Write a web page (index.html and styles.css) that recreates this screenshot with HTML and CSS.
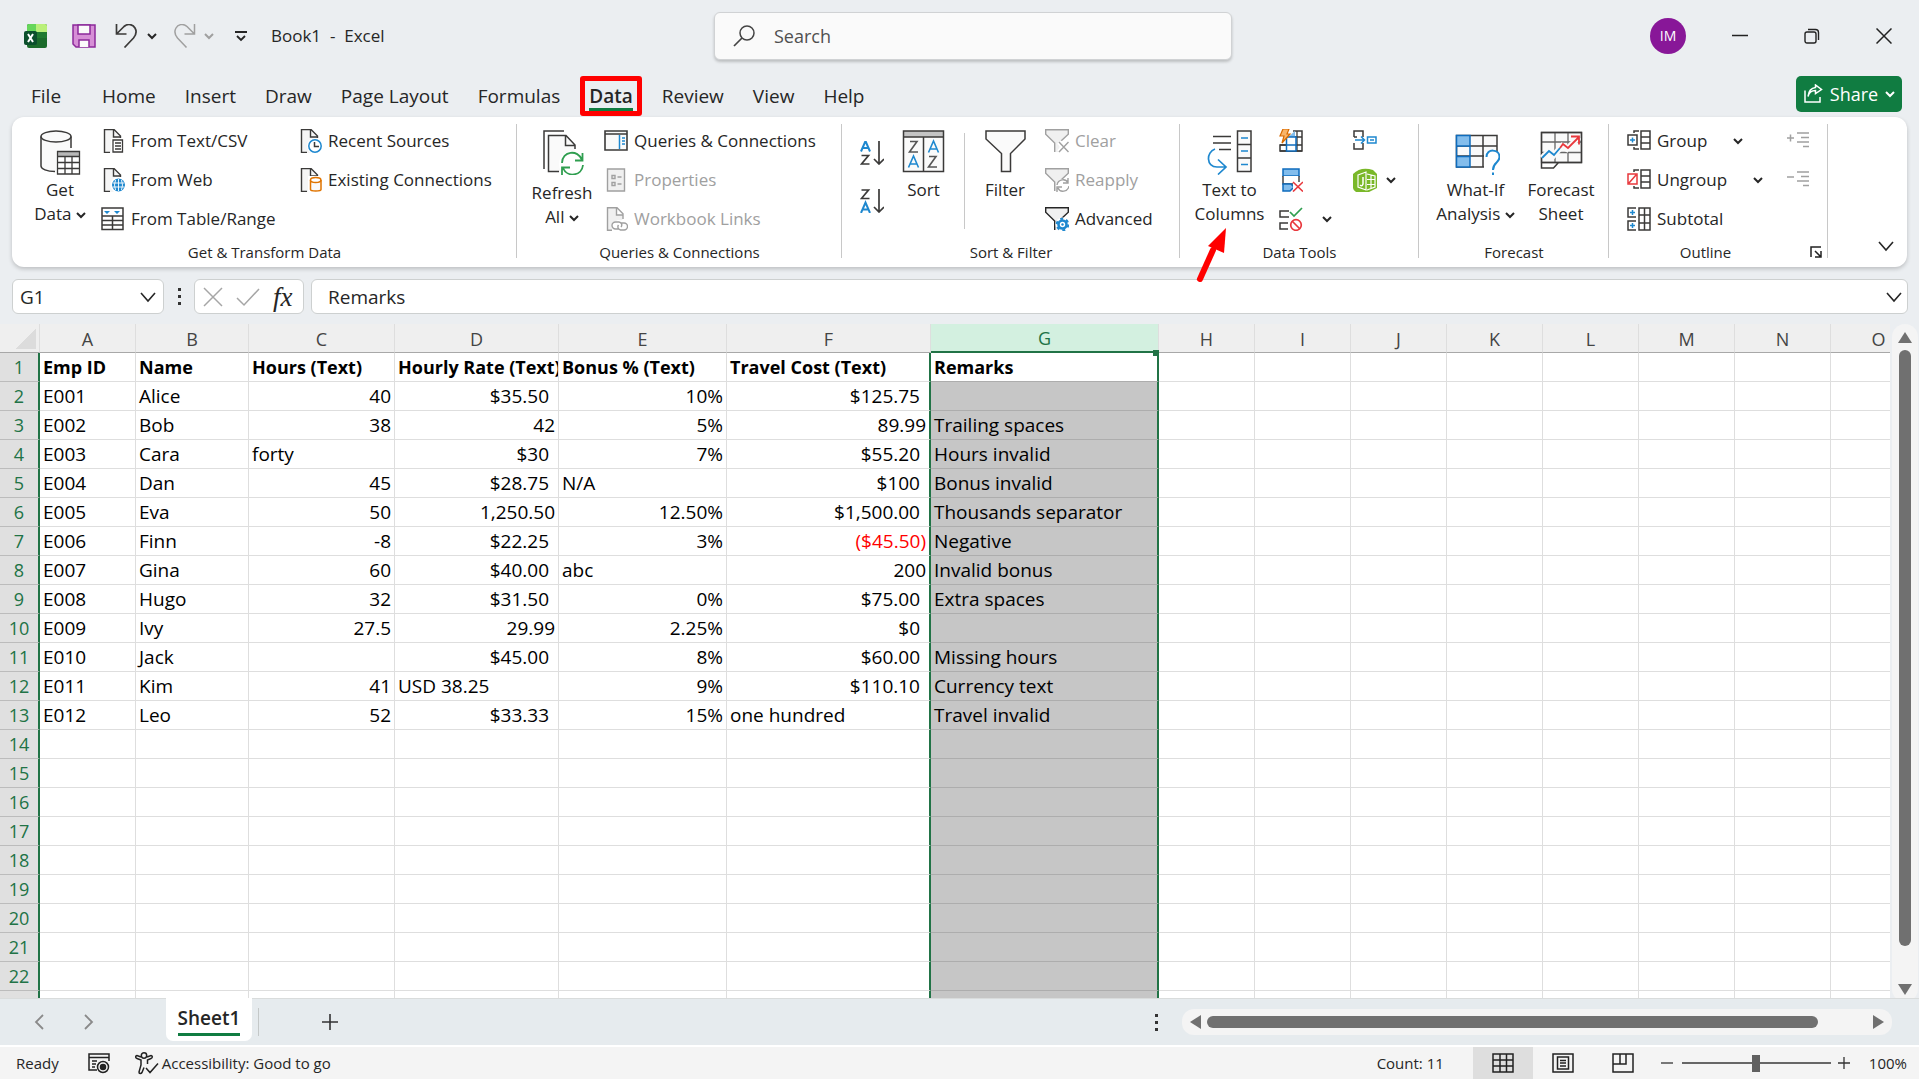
FILE: index.html
```html
<!DOCTYPE html>
<html lang="en">
<head>
<meta charset="utf-8">
<title>Book1 - Excel</title>
<link rel="stylesheet" href="styles.css">
</head>
<body>
<svg class="defs" aria-hidden="true">
  <symbol id="caret" viewBox="0 0 10 10"><path d="M1 3l4 4 4-4" fill="none" stroke="currentColor" stroke-width="2"/></symbol>
  <symbol id="chevron" viewBox="0 0 16 16"><path d="M1 4l7 8 7-8" fill="none" stroke="currentColor" stroke-width="1.6"/></symbol>
  <symbol id="page" viewBox="0 0 24 24"><path d="M3.5.5H13l6 6V24H3.5z" fill="#f5f5f5"/><path d="M9 23.5H3.5V.5H13l6.5 6.5v2M12.5.5V8H19" fill="none" stroke="#3b3a39" stroke-width="1.4"/></symbol>
  <symbol id="funnel" viewBox="0 0 24 24"><path d="M.7.7h22.600v4.500L14.500 14v9H9.500v-9L.7 5.200z" fill="#f0f0f0"/><path d="M9.700 23v-9L.7 5.200V.7h22.600v4.500L16 12" fill="none" stroke="currentColor" stroke-width="1.400"/></symbol>
</svg>

<header class="titlebar">
  <div class="quick">
    <svg class="i24" viewBox="0 0 24 24"><rect x="3" y="0" width="20" height="24" rx="2" fill="#1b6b2b"/><path d="M3 2a2 2 0 0 1 2-2h7v8H3z" fill="#66d65b"/><path d="M12 0h9a2 2 0 0 1 2 2v6H12z" fill="#baf07a"/><path d="M12 8h11v6H12z" fill="#1f7a30"/><rect x="0" y="7" width="13" height="14" rx="2" fill="#0b4f2c"/><path d="M4 10l5 8M9 10l-5 8" stroke="#fff" stroke-width="2"/></svg>
    <button class="flat save" aria-label="Save"><svg class="i24" viewBox="0 0 24 24"><path d="M1 1h22v22H4l-3-3z" fill="#d68fd6" stroke="#8c2a9a" stroke-width="1.500"/><path d="M6 1h12v9H6z" fill="#fafafa" stroke="#8c2a9a" stroke-width="1.500"/><path d="M7 23v-7h10v7" fill="#fafafa" stroke="#8c2a9a" stroke-width="1.500"/></svg></button>
    <button class="flat undo" aria-label="Undo"><svg class="i24" viewBox="0 0 24 24"><path d="M1.500 0v10h10M1.500 10L9 2.500C13-1 18 .5 20 4s1 7-1.500 10L9.500 23.500" fill="none" stroke="#3b3a39" stroke-width="1.700"/></svg><svg class="i10"><use href="#caret"/></svg></button>
    <button class="flat redo" aria-label="Redo" disabled><svg class="i24" viewBox="0 0 24 24"><path d="M22.500 0v10h-10M22.500 10L15 2.500C11-1 6 .5 4 4s-1 7 1.500 10l9 9.500" fill="none" stroke="currentColor" stroke-width="1.500"/></svg><svg class="i10"><use href="#caret"/></svg></button>
    <button class="flat custom" aria-label="Customize"><svg class="i12" viewBox="0 0 12 12"><path d="M0 2h12M2 6l4 4 4-4" fill="none" stroke="currentColor" stroke-width="1.800"/></svg></button>
    <span class="doc">Book1&nbsp; -&nbsp; Excel</span>
  </div>
  <label class="search"><svg class="i24" viewBox="0 0 24 24"><circle cx="14" cy="9" r="7" fill="none" stroke="#444" stroke-width="1.500"/><path d="M9 14l-8 8" stroke="#444" stroke-width="1.700"/></svg><input type="text" placeholder="Search" aria-label="Search"></label>
  <div class="window">
    <button class="avatar">IM</button>
    <button class="flat" aria-label="Minimize"><svg class="i16" viewBox="0 0 16 16"><path d="M0 7.500h16" stroke="#222" stroke-width="1.500"/></svg></button>
    <button class="flat" aria-label="Restore"><svg class="i16" viewBox="0 0 16 16" fill="none" stroke="#222" stroke-width="1.400"><rect x="1" y="4" width="11" height="11" rx="2"/><path d="M4 1.500h7.500a3 3 0 0 1 3 3V12"/></svg></button>
    <button class="flat" aria-label="Close"><svg class="i16" viewBox="0 0 16 16"><path d="M.5.5l15 15M15.500.5l-15 15" stroke="#222" stroke-width="1.500"/></svg></button>
  </div>
</header>

<nav class="tabs">
  <a href="#" class="file">File</a><a href="#">Home</a><a href="#">Insert</a><a href="#">Draw</a><a href="#">Page Layout</a><a href="#">Formulas</a><a href="#" class="active">Data</a><a href="#">Review</a><a href="#">View</a><a href="#">Help</a>
  <button class="share"><svg class="i20" viewBox="0 0 20 20" fill="none" stroke="#fff" stroke-width="1.500"><path d="M2 6.500V18h15v-5"/><path d="M5 12.500C6 8.500 9 6.500 12.500 6.500V9.500L18.500 5.500 12.500 1v2.500C8 4 5.500 8 5 12.500z"/></svg>Share<svg class="i10"><use href="#caret"/></svg></button>
</nav>

<section class="ribbon">
  <div class="group g-get">
    <div class="body">
      <button class="big"><svg class="i45" viewBox="0 0 45 45"><path d="M3 6v31c0 3 7 5 15 5V20h15V6C33 0 3 0 3 6z" fill="#fafafa"/><g fill="none" stroke="#3b3a39" stroke-width="1.500"><ellipse cx="18" cy="6.500" rx="15" ry="5.500"/><path d="M3 6.500V36c0 3 6 5.500 14 5.500M33 6.500V18"/></g><rect x="19" y="21.500" width="23" height="23" fill="#fff"/><rect x="19" y="21.500" width="23" height="5" fill="#b8b8b8"/><path d="M19.500 21.500h22v22.500h-22zM19.500 26.500h22M19.500 32.500h22M19.500 38.500h22M27 26.500v18M34 26.500v18" fill="none" stroke="#3b3a39" stroke-width="1.300"/></svg><span>Get<br>Data <svg class="i10"><use href="#caret"/></svg></span></button>
      <div class="col c1">
        <button class="small"><svg class="i24" viewBox="0 0 24 24"><use href="#page"/><rect x="10" y="9" width="14" height="15" fill="#fff"/><path d="M12 11h9.500v12H12zM14 14h6M14 17h6M14 20h6" fill="none" stroke="#3b3a39" stroke-width="1.300"/></svg>From Text/CSV</button>
        <button class="small"><svg class="i24" viewBox="0 0 24 24"><use href="#page"/><circle cx="17.500" cy="17" r="8" fill="#fff"/><circle cx="17.500" cy="17" r="6.500" fill="#1e88cf"/><path d="M17.500 11v12M11.500 15h12M11.500 19h12M14.500 12q-2 5 0 10M20.500 12q2 5 0 10" fill="none" stroke="#fff" stroke-width=".9"/></svg>From Web</button>
        <button class="small"><svg class="i24" viewBox="0 0 24 24"><path d="M1 1h21v21.500H1zM1 9h21M1 13.500h21M1 18h21M11.500 9v13.500" fill="none" stroke="#3b3a39" stroke-width="1.500"/><path d="M3 4h6L6 7zM13 4h6l-3 3z" fill="#1e88cf"/></svg>From Table/Range</button>
      </div>
      <div class="col">
        <button class="small"><svg class="i24" viewBox="0 0 24 24"><use href="#page"/><circle cx="17" cy="17" r="8" fill="#fff"/><circle cx="17" cy="17" r="6.200" fill="#fff" stroke="#1e88cf" stroke-width="1.500"/><path d="M16.500 13v4.500H21" fill="none" stroke="#3b3a39" stroke-width="1.500"/></svg>Recent Sources</button>
        <button class="small"><svg class="i24" viewBox="0 0 24 24"><use href="#page"/><path d="M10 8h14v16H10z" fill="#fff"/><path d="M12.500 12v9.500c0 2 10.500 2 10.500 0V12" fill="#fafafa" stroke="#e07400" stroke-width="1.500"/><ellipse cx="17.700" cy="12" rx="5.200" ry="2.500" fill="#fff" stroke="#e07400" stroke-width="1.500"/></svg>Existing Connections</button>
      </div>
    </div>
    <div class="label">Get &amp; Transform Data</div>
  </div>

  <div class="group g-query">
    <div class="body">
      <button class="big refresh"><svg class="i45" viewBox="0 0 45 45"><path d="M8 5.500h18l9 9.500V42H8z" fill="#fafafa"/><path d="M24 1H4v38M19 41.500H8.500V5.500H26l9 9.500v4M25.500 5.500V15.500H35" fill="none" stroke="#3b3a39" stroke-width="1.500"/><circle cx="32" cy="34" r="13" fill="#fff"/><g fill="none" stroke="#2f9e4f" stroke-width="1.800"><path d="M22 33c0-12 16-14 20-3M42.500 23v7.500H35M43 35c-1 11-16 13-20 3M22 45v-7.500h8"/></g></svg><span>Refresh<br>All <svg class="i10"><use href="#caret"/></svg></span></button>
      <div class="col">
        <button class="small"><svg class="i24" viewBox="0 0 24 24"><path d="M1 2h22v19H1zM1 5h22" fill="#fafafa" stroke="#3b3a39" stroke-width="1.600"/><path d="M15.500 6v14" stroke="#1e88cf" stroke-width="1.500"/><path d="M18 9h3M18 12h3M18 15h3" stroke="#1e88cf" stroke-width="1.500"/></svg>Queries &amp; Connections</button>
        <button class="small" disabled><svg class="i24" viewBox="0 0 24 24" fill="#f0f0f0" stroke="currentColor" stroke-width="1.400"><path d="M3.500 1h17v22h-17z"/><path d="M8 7.500h3v3H8zM8 14.500h3v3H8zM13.500 9h4M13.500 16h4"/></svg>Properties</button>
        <button class="small" disabled><svg class="i24" viewBox="0 0 24 24" fill="#f0f0f0" stroke="currentColor" stroke-width="1.400"><path d="M8 23.300H3.500V.7H13l6 6V12M12.500.7V8H19"/><path d="M8 24v-8l6-3 10 1v10z" fill="#fff" stroke="none"/><path d="M15 22H11.500a3.300 3.300 0 0 1 0-7H15a3 3 0 0 1 2 5M17 16h3a3.200 3.200 0 0 1 0 7h-3.500a3.200 3.200 0 0 1-2-5" fill="none"/></svg>Workbook Links</button>
      </div>
    </div>
    <div class="label">Queries &amp; Connections</div>
  </div>

  <div class="group g-sort">
    <div class="body">
      <div class="az">
        <button class="flat" aria-label="Sort A to Z"><svg class="i24" viewBox="0 0 24 24" fill="none" stroke="#3b3a39" stroke-width="1.700"><path d="M1 10.500L5.500 0 10 10.500M2.500 7h6" stroke="#1e88cf" stroke-width="2"/><path d="M1.500 14.500H8.500L1.500 23h8M19 0v23M14 18l5 5 5-5"/></svg></button>
        <button class="flat" aria-label="Sort Z to A"><svg class="i24" viewBox="0 0 24 24" fill="none" stroke="#3b3a39" stroke-width="1.700"><path d="M1 24L5.500 13.500 10 24M2.500 20.500h6" stroke="#1e88cf" stroke-width="2"/><path d="M1.500 1H8.500L1.500 9.500h8M19 0v23M14 18l5 5 5-5"/></svg></button>
      </div>
      <button class="big sort"><svg class="i45" viewBox="0 0 45 45"><path d="M2 1h41v41H2z" fill="#fafafa"/><path d="M2 1h41v6H2z" fill="#c4c4c4"/><path d="M2.500 1h40v40.500h-40zM2.500 7h40M22.500 7v34.500" fill="none" stroke="#3b3a39" stroke-width="1.500"/><g fill="none" stroke="#555" stroke-width="1.600"><path d="M9 11.500h7L8.500 22H17M28 26.500h7L27.500 37H36"/><path d="M7.500 37.500l5-11.500 5 11.500M9 34h7M27.500 22.500l5-11.500 5 11.500M29 19h7" stroke="#1e88cf"/></g></svg><span>Sort</span></button>
      <div class="rule"></div>
      <button class="big filter"><svg class="i45" viewBox="0 0 45 45"><path d="M3 1h39v8L27.500 23.500V41.500h-9V23.500L3 9z" fill="#fafafa" stroke="#3b3a39" stroke-width="1.500"/></svg><span>Filter</span></button>
      <div class="col">
        <button class="small" disabled><svg class="i24" viewBox="0 0 24 24"><use href="#funnel"/><path d="M14 13l10 10M24 13L14 23" stroke="#fff" stroke-width="5"/><path d="M14 13l9.500 10M23.500 13L14 23" stroke="currentColor" stroke-width="1.400"/></svg>Clear</button>
        <button class="small" disabled><svg class="i24" viewBox="0 0 24 24"><use href="#funnel"/><circle cx="18" cy="18" r="7" fill="#fff"/><path d="M12 17c1-6 9-7 11-2M23 10v5h-5M24 18c-1 6-9 7-11 2M12 24v-5h5" fill="none" stroke="currentColor" stroke-width="1.400"/></svg>Reapply</button>
        <button class="small"><svg class="i24" viewBox="0 0 24 24"><use href="#funnel"/><circle cx="17.500" cy="17.500" r="7" fill="#fff"/><circle cx="17.500" cy="17.500" r="4" fill="none" stroke="#1e88cf" stroke-width="2.600"/><circle cx="17.500" cy="17.500" r="5.800" fill="none" stroke="#1e88cf" stroke-width="2" stroke-dasharray="3 3.070"/><circle cx="17.500" cy="17.500" r="1.200" fill="#1e88cf"/></svg>Advanced</button>
      </div>
    </div>
    <div class="label">Sort &amp; Filter</div>
  </div>

  <div class="group g-tools">
    <div class="body">
      <button class="big t2c"><svg class="i45" viewBox="0 0 45 45"><path d="M30.500 1H44v40.500H30.500zM30.500 14.500H44M30.500 28H44" fill="#fafafa" stroke="#3b3a39" stroke-width="1.500"/><path d="M6 6.500h18M6 13h18M12 19.500h12" stroke="#3b3a39" stroke-width="1.500"/><path d="M34 8h7M34 21h7M34 34.500h7" stroke="#1e88cf" stroke-width="1.600"/><path d="M8 19C-1 22-1 37 10 37h9M11 29.500l8 7.500-8 7.500" fill="none" stroke="#1e88cf" stroke-width="1.700"/></svg><span>Text to<br>Columns</span>
        <svg class="arrow" viewBox="0 0 32 56"><path d="M6 51L19 22" stroke="#f00" stroke-width="6" stroke-linecap="round"/><path d="M32 0L14 18l16 7z" fill="#f00"/></svg></button>
      <div class="col tools1">
        <button class="small" aria-label="Flash Fill"><svg class="i24" viewBox="0 0 24 24"><path d="M14 2h9v20H1v-6h6" fill="none" stroke="#3b3a39" stroke-width="1.500"/><path d="M1 16h22M1 22h22M15 8h8M18 2v20" stroke="#3b3a39" stroke-width="1.300"/><path d="M8 9L16 2v7H9z" fill="#83bdec"/><path d="M7.500 8h9.500v14H7.500zM7.500 16H17" fill="#fff" stroke="#0f6cbd" stroke-width="1.500"/><path d="M4 0h6L8 5h3L3 14l2-7H1z" fill="#f9b56a" stroke="#d96b00" stroke-width="1.200"/></svg></button>
        <button class="small" aria-label="Remove Duplicates"><svg class="i24" viewBox="0 0 24 24"><path d="M4 1h16v7H4z" fill="#83bdec" stroke="#0f6cbd" stroke-width="1.500"/><path d="M4 8v8h16V8" fill="#fff" stroke="#3b3a39" stroke-width="1.400"/><path d="M4 16h8l3 3-4 4H4z" fill="#83bdec" stroke="#0f6cbd" stroke-width="1.500"/><path d="M14 14h10v10H14z" fill="#fff"/><path d="M14 14l10 9.500M24 14l-10 9.500" stroke="#e8383d" stroke-width="1.600"/></svg></button>
        <button class="small" aria-label="Data Validation"><svg class="i24" viewBox="0 0 24 24" fill="none" stroke="#3b3a39" stroke-width="1.500"><path d="M10 4H1v6h9M9 16H1v6h8"/><path d="M11 5l4 4 8-8" stroke="#2f9e4f" stroke-width="1.700"/><circle cx="17" cy="18" r="5.300" stroke="#e8383d" stroke-width="1.700"/><path d="M13 14l8 8" stroke="#e8383d" stroke-width="1.700"/></svg><svg class="i10 gap"><use href="#caret"/></svg></button>
      </div>
      <div class="col">
        <button class="small" aria-label="Consolidate"><svg class="i24" viewBox="0 0 24 24" fill="none" stroke="#3b3a39" stroke-width="1.500"><path d="M1 8V2h9v6M1 14v6h9v-6M1 8h3"/><path d="M2 11h9M8 7.500l3.500 3.500L8 14.500M14.500 8h8.500v6h-8.500zM17 11h4" stroke="#1e88cf"/></svg></button>
        <button class="small" aria-label="Data Model"><svg class="i24" viewBox="0 0 24 24"><path d="M0 6Q8-2 20 2l4 4v14l-8 4H3q-3-2-3-4z" fill="#7ab829"/><path d="M5 7l8-3v18l-8-3zM14 6l8 2v11l-8 3M14 11.500h8M14 16.500h8M18 7v13" fill="none" stroke="#fff" stroke-width="1.200"/><path d="M10 9v7q-1 3-3 1" stroke="#fff" stroke-width="1.500" fill="none"/></svg><svg class="i10"><use href="#caret"/></svg></button>
      </div>
    </div>
    <div class="label">Data Tools</div>
  </div>

  <div class="group g-fore">
    <div class="body">
      <button class="big whatif"><svg class="i45" viewBox="0 0 45 45"><path d="M1 5h41v32H1z" fill="#fafafa"/><path d="M1.500 5.500H42V37H1.500zM1.500 16H42M1.500 26H42M28 5v32" fill="none" stroke="#3b3a39" stroke-width="1.500"/><path d="M1.500 5.500H15V16H1.500zM1.500 26.500H15V37H1.500zM1.500 5v32M15 5v32" fill="#83bdec" stroke="#0f6cbd" stroke-width="1.500"/><path d="M29 22h16v23H29z" fill="#fff"/><path d="M31.500 27c0-9 13-8 13 0 0 6-6.500 5-6.500 13M38 42.500v2.500" fill="none" stroke="#1e88cf" stroke-width="2"/></svg><span>What-If<br>Analysis <svg class="i10"><use href="#caret"/></svg></span></button>
      <button class="big fsheet"><svg class="i45" viewBox="0 0 45 45"><path d="M2.500 2.500h40v30h-40zM2.500 12h40M2.500 22.500h40M16 2.500v30M29 2.500v30" fill="#fafafa" stroke="#666" stroke-width="1.300"/><path d="M2.500 32.500v5.500h12l5-5.500M2.500 2.500h40v30h-40z" fill="none" stroke="#3b3a39" stroke-width="1.500"/><path d="M3 28l7-7 5 4 8-9 5 3L40 7" fill="none" stroke="#fafafa" stroke-width="6"/><path d="M3 28l7-7 5 4 6-7" fill="none" stroke="#1e88cf" stroke-width="1.800"/><path d="M21 18l3-4 5 4L40 7M32 6.500h8v8" fill="none" stroke="#e8383d" stroke-width="1.800"/></svg><span>Forecast<br>Sheet</span></button>
    </div>
    <div class="label">Forecast</div>
  </div>

  <div class="group g-out">
    <div class="body">
      <div class="col outline">
        <button class="small"><svg class="i24" viewBox="0 0 24 24" fill="none" stroke="#3b3a39" stroke-width="1.500"><path d="M14 2h9v18h-9zM14 8h9M14 14h9M12 2H7v2M7 18v2h5M1 6h9v10H1z"/><path d="M3 11h5M5.500 8.500v5" stroke="#1e88cf"/></svg>Group<svg class="i10 far"><use href="#caret"/></svg></button>
        <button class="small"><svg class="i24" viewBox="0 0 24 24" fill="none" stroke="#3b3a39" stroke-width="1.500"><path d="M14 2h9v18h-9zM14 8h9M14 14h9M12 2H7v2M7 18v2h5"/><path d="M1 6h9v10H1zM2 15l7-8" stroke="#e8383d"/></svg>Ungroup<svg class="i10 far"><use href="#caret"/></svg></button>
        <button class="small"><svg class="i24" viewBox="0 0 24 24" fill="none" stroke="#3b3a39" stroke-width="1.500"><path d="M12 1h11v22H12zM12 8h11M12 16h11M17.500 1v22M9 1H1v9h8M9 14H1v9h8"/><path d="M3 5.500h5M5.500 3v5M3 18.500h5M5.500 16v5" stroke="#1e88cf"/></svg>Subtotal</button>
      </div>
      <div class="col">
        <button class="small" aria-label="Show Detail" disabled><svg class="i24" viewBox="0 0 24 24" stroke="currentColor" stroke-width="1.500"><path d="M10 4h12M14 8.500h8M10 13h12M16 17.500h6M0 9h7M3.500 5.500v7"/></svg></button>
        <button class="small" aria-label="Hide Detail" disabled><svg class="i24" viewBox="0 0 24 24" stroke="currentColor" stroke-width="1.500"><path d="M10 4h12M14 8.500h8M10 13h12M16 17.500h6M0 9h7"/></svg></button>
      </div>
    </div>
    <div class="label">Outline<button class="flat launcher" aria-label="Outline settings"><svg class="i12" viewBox="0 0 12 12" fill="none" stroke="#222" stroke-width="1.500"><path d="M1 11V1h10M5 5l6 6M11 5v6H5"/></svg></button></div>
  </div>
  <button class="flat collapse" aria-label="Collapse ribbon"><svg class="i16"><use href="#chevron"/></svg></button>
</section>

<section class="formula">
  <label class="namebox"><input type="text" value="G1" aria-label="Name box"><svg class="i16"><use href="#chevron"/></svg></label>
  <span class="dots"></span>
  <div class="fx">
    <button class="flat" aria-label="Cancel"><svg class="i20" viewBox="0 0 20 20"><path d="M1 1l18 18M19 1L1 19" stroke="#a6a6a6" stroke-width="1.500"/></svg></button>
    <button class="flat" aria-label="Enter"><svg class="i24" viewBox="0 0 24 24"><path d="M1 13l7 7L23 4" fill="none" stroke="#a6a6a6" stroke-width="1.500"/></svg></button>
    <button class="flat fxb">fx</button>
  </div>
  <label class="entry"><input type="text" value="Remarks" aria-label="Formula bar"><svg class="i16"><use href="#chevron"/></svg></label>
</section>

<main class="sheet">
  <div class="cells"><table class="grid" id="grid"></table></div>
  <div class="vscroll"><i class="tri up"></i><i class="thumb"></i><i class="tri down"></i></div>
</main>

<footer>
  <div class="sheets">
    <button class="flat prev" aria-label="Previous sheet"><svg class="i16" viewBox="0 0 16 16"><path d="M11 1L4 8l7 7" fill="none" stroke="#8a8a8a" stroke-width="1.800"/></svg></button>
    <button class="flat next" aria-label="Next sheet"><svg class="i16" viewBox="0 0 16 16"><path d="M5 1l7 7-7 7" fill="none" stroke="#8a8a8a" stroke-width="1.800"/></svg></button>
    <button class="sheet-tab"><span>Sheet1</span></button>
    <button class="flat add" aria-label="New sheet"><svg class="i16" viewBox="0 0 16 16"><path d="M0 8h16M8 0v16" stroke="#333" stroke-width="1.600"/></svg></button>
    <span class="dots"></span>
    <div class="hscroll"><i class="tri left"></i><i class="thumb"></i><i class="tri right"></i></div>
  </div>
  <div class="status">
    <span class="ready">Ready</span>
    <button class="flat macro" aria-label="Record macro"><svg class="i22" viewBox="0 0 22 22" fill="none" stroke="#222" stroke-width="1.500"><path d="M9 18H1V2h20v7M1 5.500h20M4 9h5M4 12h4M4 15h3"/><circle cx="15" cy="15" r="5.500"/><circle cx="15" cy="15" r="2.500" fill="#222"/></svg></button>
    <button class="flat access"><svg class="i24" viewBox="0 0 24 24" fill="none" stroke="#222" stroke-width="1.500"><circle cx="9" cy="4.500" r="2.700"/><path d="M6 6L2 4.500C0 5 .5 7 2 7.500L6 9v5l-2 7c0 2 2 2 3 .5l2-5M12 6l4-1.500c2 .5 1.500 2.500 0 3L12.500 9v4M11 17l4 4.500 8-9"/></svg>Accessibility: Good to go</button>
    <span class="count">Count: 11</span>
    <button class="flat view on" aria-label="Normal view"><svg class="i22" viewBox="0 0 22 22" fill="none" stroke="#222" stroke-width="1.500"><path d="M1 2h20v18H1zM1 8h20M1 14h20M8 2v18M14.500 2v18"/></svg></button>
    <button class="flat view" aria-label="Page layout view"><svg class="i22" viewBox="0 0 22 22" fill="none" stroke="#222" stroke-width="1.500"><path d="M1 2h20v18H1zM5.500 5h11v12h-11zM8 8.500h6M8 11h6M8 14h6"/></svg></button>
    <button class="flat view" aria-label="Page break view"><svg class="i22" viewBox="0 0 22 22" fill="none" stroke="#222" stroke-width="1.500"><path d="M1 2h20v18H1zM8 2v10M14 2v10H1"/></svg></button>
    <button class="flat zoom-out" aria-label="Zoom out"><svg class="i12" viewBox="0 0 12 12"><path d="M0 6h12" stroke="#333" stroke-width="1.300"/></svg></button>
    <input class="zoom" type="range" min="0" max="100" value="50" aria-label="Zoom">
    <button class="flat" aria-label="Zoom in"><svg class="i12" viewBox="0 0 12 12"><path d="M0 6h12M6 0v12" stroke="#333" stroke-width="1.300"/></svg></button>
    <span class="pct">100%</span>
  </div>
</footer>
<script src="grid.js"></script>
</body>
</html>
```
FILE: styles.css
```css
*, *::before, *::after { box-sizing: border-box; }
body {
  margin: 0;
  height: 100vh;
  display: flex;
  flex-direction: column;
  overflow: hidden;
  background: #ebeef1;
  color: #262626;
  font: 18px/24px "Open Sans", "Noto Sans", sans-serif;
}
button, input { font: inherit; color: inherit; }
button { margin: 0; padding: 0; border: 0; background: none; }
button:disabled { color: #a0a0a0; }
input[type="text"] { border: 0; padding: 0; background: none; min-width: 0; flex: 1; outline: 0; }
svg { flex: none; display: block; }
.defs { position: absolute; width: 0; height: 0; }
.flat { display: flex; align-items: center; justify-content: center; }
.i10 { width: 10px; height: 10px; }
.i12 { width: 12px; height: 12px; }
.i16 { width: 16px; height: 16px; }
.i20 { width: 20px; height: 20px; }
.i22 { width: 22px; height: 22px; }
.i24 { width: 24px; height: 24px; }
.i45 { width: 45px; height: 45px; }

.titlebar { display: grid; grid-template-columns: 690fr 518px 660fr; height: 72px; align-items: center; flex: none; padding: 0 27px 0 24px; }
.quick { display: flex; align-items: center; font-size: 17px; }
.save { margin-left: 24px; }
.undo, .redo { gap: 8px; }
.undo { margin-left: 19px; }
.redo { margin-left: 15px; }
.custom { margin-left: 21px; }
.doc { margin-left: 24px; }
.search { display: flex; align-items: center; gap: 17px; height: 48px; padding: 0 18px; background: #fafafa; border: 1px solid #d0d2d4; border-radius: 6px; box-shadow: 0 2px 3px #0003; }
.search input::placeholder { color: #505050; opacity: 1; }
.window { display: flex; justify-content: flex-end; align-items: center; gap: 56px; }
.avatar { width: 36px; height: 36px; margin-right: -10px; border-radius: 50%; background: #881798; color: #fff; font-size: 14px; }

.tabs { display: flex; gap: 29px; height: 45px; flex: none; padding: 0 17px 0 31px; font-size: 19px; }
.tabs a { color: inherit; text-decoration: none; height: 40px; line-height: 48px; white-space: nowrap; }
.tabs .file { margin-right: 12px; }
.tabs .active { position: relative; font-weight: 600; }
.tabs .active::before { content: ""; position: absolute; left: 0; right: 0; top: 36px; height: 3px; background: #107c41; }
.tabs .active::after { content: ""; position: absolute; left: -9px; right: -9px; top: 4px; height: 40px; border: 5px solid #f00; border-radius: 3px; }
.share { display: flex; align-items: center; justify-content: center; gap: 7px; width: 106px; height: 36px; margin: 4px 0 0 auto; border-radius: 5px; background: #107c41; color: #fff; font-size: 18px; }

.ribbon { display: flex; flex: none; height: 150px; margin: 0 12px; padding: 5px 0 2px; background: #fff; border-radius: 12px; box-shadow: 0 2px 4px #0003; }
.group { display: flex; flex-direction: column; flex: none; position: relative; }
.group::after { content: ""; position: absolute; right: 0; top: 2px; height: 134px; border-right: 1px solid #c8c8c8; }
.body { display: flex; height: 117px; font-size: 17px; }
.label { position: relative; text-align: center; font-size: 15px; line-height: 26px; }
.g-get { width: 505px; }
.g-query { width: 325px; }
.g-sort { width: 338px; }
.g-tools { width: 239px; }
.g-fore { width: 190px; }
.g-out { width: 219px; }
.g-out .label { padding-right: 26px; }
.big { display: flex; flex-direction: column; align-items: center; width: 96px; padding-top: 8px; gap: 3px; position: relative; line-height: 24px; white-space: nowrap; }
.big span svg { display: inline-block; }
.g-get .big { margin-right: -7px; }
.g-get .c1 { width: 197px; }
.g-query .big { width: 90px; margin-right: -3px; gap: 6px; }
.big.sort { width: 65px; margin-left: 7px; }
.rule { width: 1px; margin: 11px 0 10px 8px; background: #c8c8c8; }
.big.filter { width: 80px; }
.az { display: flex; flex-direction: column; gap: 24px; padding: 19px 0 0 18px; }
.big.t2c { width: 99px; }
.tools1 { width: 74px; }
.big.whatif { width: 100px; padding-left: 13px; }
.big.fsheet { width: 84px; }
.whatif svg.i45 { margin-left: 3px; }
.col { display: flex; flex-direction: column; flex: none; }
.small { display: flex; align-items: center; gap: 6px; height: 39px; white-space: nowrap; padding: 0 0 1px; }
.small:disabled { color: #a0a0a0; }
.gap { margin-left: 10px; }
.g-tools .col .small { gap: 9px; }
.outline { width: 178px; padding-left: 18px; }
.far { margin-left: 20px; }
.collapse { margin: 0 13px 11px auto; align-self: flex-end; }
.launcher { position: absolute; right: 6px; top: 7px; }
.arrow { position: absolute; left: 14px; top: 106px; width: 32px; height: 56px; z-index: 2; }

.formula { display: flex; flex: none; height: 57px; padding: 12px 11px 10px 12px; font-size: 19px; }
.namebox, .fx, .entry { display: flex; align-items: center; background: #fff; border: 1px solid #cdd0d0; border-radius: 6px; }
.namebox { width: 152px; padding: 0 7px; }
.dots { width: 3px; height: 17px; background: repeating-linear-gradient(#333 0 3px, transparent 3px 7px); align-self: center; margin: 0 13px 0 14px; }
.fx { width: 110px; padding: 0 6px 0 8px; gap: 13px; }
.fxb { font: italic 27px/24px "Liberation Serif", serif; }
.entry { flex: 1; margin-left: 7px; padding: 0 5px 0 16px; }

.sheet { display: flex; flex: 1; min-height: 0; }
.cells { flex: 1; overflow: hidden; background: #fff; min-width: 0; }
.vscroll { display: flex; flex-direction: column; align-items: center; width: 26px; margin: 0 1px -4px 2px; padding: 8px 0 7px; gap: 7px; border-radius: 13px; background: #f4f4f4; }
.vscroll .thumb { flex: 1; width: 12px; border-radius: 6px; background: #707070; margin-bottom: 31px; }
.tri { width: 14px; height: 11px; background: #707070; }
.up { clip-path: polygon(50% 0, 100% 100%, 0 100%); }
.down { clip-path: polygon(0 0, 100% 0, 50% 100%); }
.left, .right { width: 11px; height: 14px; }
.left { clip-path: polygon(0 50%, 100% 0, 100% 100%); }
.right { clip-path: polygon(0 0, 100% 50%, 0 100%); }

.grid { width: 1926px; table-layout: fixed; border-collapse: separate; border-spacing: 0; color: #000; font: 19px/28px "Open Sans", "Noto Sans", sans-serif; }
.grid td, .grid th { height: 29px; padding: 0 3px; border: 0 solid #dedede; border-width: 0 1px 1px 0; overflow: hidden; white-space: nowrap; text-align: left; font-weight: 400; }
.grid thead th { background: #efefef; color: #444; text-align: center; border-bottom-color: #a8a8a8; padding-top: 2px; font: 18px/26px "Open Sans", sans-serif; }
.grid tbody th { background: #e0e0e0; color: #217346; text-align: center; border-right: 2px solid #217346; border-bottom-color: #bcbcbc; padding: 0; font-size: 18px; }
.grid thead th.corner { background: linear-gradient(135deg, transparent 50%, #dcdcdc 50%) 15px 5px / 21px 20px no-repeat #efefef; }
.grid thead th.picked { position: relative; overflow: visible; background: #d3f0e0; color: #217346; border-bottom: 2px solid #217346; line-height: 25px; }
.grid thead th.picked::after { content: ""; position: absolute; right: -1px; bottom: -5px; width: 6px; height: 6px; background: #217346; }
.grid tbody tr:first-child td { font-weight: 700; font-size: 18px; }
.grid td.num { text-align: right; }
.grid td.cur { text-align: right; padding-right: 9px; }
.grid td.neg { color: #f00; }
.grid td.picked { background: #c6c6c6; border-bottom-color: #adadad; border-right: 2px solid #217346; }
.grid td.before { border-right: 2px solid #217346; }
.grid tbody tr:first-child td.picked { background: #fff; }

footer { flex: none; }
.sheets { display: flex; align-items: center; height: 49px; border-top: 1px solid #d9dcdc; border-bottom: 2px solid #fff; background: #e6ebee; }
.prev { margin-left: 32px; }
.next { margin-left: 32px; }
.sheet-tab { width: 86px; height: 43px; margin-left: 70px; margin-top: -1px; align-self: flex-start; background: #fff; border-radius: 0 0 7px 7px; font-weight: 600; font-size: 19px; }
.sheet-tab span { display: inline-block; border-bottom: 3px solid #107c41; line-height: 30px; }
.add { margin-left: 6px; padding-left: 63px; height: 28px; border-left: 1px solid #c4c8c8; }
.sheets .dots { margin: 0 24px 0 auto; }
.hscroll { display: flex; align-items: center; width: 710px; height: 26px; margin-right: 27px; padding: 0 8px; border-radius: 12px; background: #f4f4f4; }
.hscroll .thumb { width: 611px; height: 12px; margin: 0 auto 0 6px; border-radius: 6px; background: #707070; }
.status { display: flex; align-items: center; height: 32px; padding: 0 12px 0 16px; background: #f4f4f4; font-size: 15px; white-space: nowrap; }
.macro { margin-left: 29px; }
.access { margin-left: 25px; gap: 3px; }
.count { margin-left: auto; margin-right: 29px; }
.view { width: 60px; height: 32px; }
.on { background: #dedede; }
.zoom-out { margin-left: 8px; }
.zoom { appearance: none; width: 149px; height: 18px; margin: 0 7px 0 9px; background: linear-gradient(#666, #666) center / 100% 2px no-repeat; }
.zoom::-webkit-slider-thumb { appearance: none; width: 8px; height: 17px; background: #606060; }
.pct { margin-left: 19px; }
```
FILE: grid.js
```
const widths = [40, 96, 113, 146, 164, 168, 204, 228, 96, 96, 96, 96, 96, 96, 96, 96];
const letters = "ABCDEFGHIJKLMNO";
const rows = [
  ["Emp ID", "Name", "Hours (Text)", "Hourly Rate (Text)", "Bonus % (Text)", "Travel Cost (Text)", "Remarks"],
  ["E001", "Alice", "40", "$35.50", "10%", "$125.75", ""],
  ["E002", "Bob", "38", "42", "5%", "89.99", "Trailing spaces"],
  ["E003", "Cara", "forty", "$30", "7%", "$55.20", "Hours invalid"],
  ["E004", "Dan", "45", "$28.75", "N/A", "$100", "Bonus invalid"],
  ["E005", "Eva", "50", "1,250.50", "12.50%", "$1,500.00", "Thousands separator"],
  ["E006", "Finn", "-8", "$22.25", "3%", "($45.50)", "Negative"],
  ["E007", "Gina", "60", "$40.00", "abc", "200", "Invalid bonus"],
  ["E008", "Hugo", "32", "$31.50", "0%", "$75.00", "Extra spaces"],
  ["E009", "Ivy", "27.5", "29.99", "2.25%", "$0", ""],
  ["E010", "Jack", "", "$45.00", "8%", "$60.00", "Missing hours"],
  ["E011", "Kim", "41", "USD 38.25", "9%", "$110.10", "Currency text"],
  ["E012", "Leo", "52", "$33.33", "15%", "one hundred", "Travel invalid"]
];

function kind(text) {
  if (text.startsWith("$")) return "cur";
  if (text.startsWith("(")) return "num neg";
  return /^-?[\d,.]+%?$/.test(text) ? "num" : "";
}

let html = "<colgroup>" + widths.map(w => `<col style="width:${w}px">`).join("") + "</colgroup><thead><tr><th class=\"corner\"></th>";
for (const c of letters) html += `<th class="${c === "G" ? "picked" : ""}">${c}</th>`;
html += "</tr></thead><tbody>";
for (let r = 0; r < 23; r++) {
  html += `<tr><th>${r < 22 ? r + 1 : ""}</th>`;
  for (let c = 0; c < letters.length; c++) {
    const text = (rows[r] && rows[r][c]) || "";
    const place = c === 6 ? " picked" : c === 5 ? " before" : "";
    html += `<td class="${kind(text)}${place}">${text}</td>`;
  }
  html += "</tr>";
}
document.getElementById("grid").innerHTML = html + "</tbody>";
```
